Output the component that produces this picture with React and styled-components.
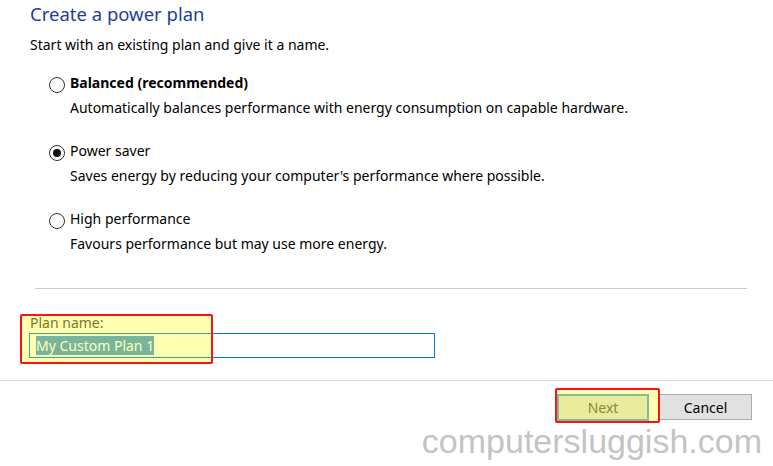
import styled, { createGlobalStyle } from 'styled-components';

const plans = [
	{
		id: 'balanced',
		name: 'Balanced (recommended)',
		bold: true,
		text: 'Automatically balances performance with energy consumption on capable hardware.',
	},
	{
		id: 'saver',
		name: 'Power saver',
		checked: true,
		text: "Saves energy by reducing your computer's performance where possible.",
	},
	{
		id: 'high',
		name: 'High performance',
		text: 'Favours performance but may use more energy.',
	},
];

export default function App() {
	return (
		<>
			<GlobalStyle />
			<Page>
				<Content>
					<Title>Create a power plan</Title>
					<Intro>Start with an existing plan and give it a name.</Intro>

					<OptionList>
						{plans.map((plan) => (
							<Option key={plan.id}>
								<OptionRow>
									<Radio checked={plan.checked} />
									<OptionName bold={plan.bold}>{plan.name}</OptionName>
								</OptionRow>
								<OptionText>{plan.text}</OptionText>
							</Option>
						))}
					</OptionList>

					<Divider />

					<Field>
						<FieldLabel>Plan name:</FieldLabel>
						<TextBox>
							<Selected>My Custom Plan 1</Selected>
						</TextBox>
						<Highlight left='-9px' top='1px' width='193px' height='50px' />
					</Field>
				</Content>

				<Footer>
					<ButtonSlot>
						<Button primary>Next</Button>
						<Highlight left='-2px' top='-6px' width='105px' height='35px' />
					</ButtonSlot>
					<Button>Cancel</Button>
				</Footer>

				<Watermark>computersluggish.com</Watermark>
			</Page>
		</>
	);
}

const GlobalStyle = createGlobalStyle`
	body {
		margin: 0;
		background: #ffffff;
		font-family: 'Noto Sans', 'Open Sans', sans-serif;
	}
`;

const Page = styled.div`
	position: relative;
	width: 773px;
	height: 466px;
	overflow: hidden;
	background: #ffffff;
	display: flex;
	flex-direction: column;
`;

const Content = styled.div`
	padding-left: 30px;
	display: flex;
	flex-direction: column;
`;

const Title = styled.h1`
	margin: 1px 0 0;
	font-size: 18.5px;
	line-height: 26px;
	font-weight: 400;
	color: #1f3d9e;
`;

const Intro = styled.p`
	margin: 8px 0 0;
	font-size: 14px;
	line-height: 20px;
	color: #000;
`;

const OptionList = styled.div`
	margin-top: 18px;
	padding-left: 19px;
	display: flex;
	flex-direction: column;
	gap: 23px;
`;

const Option = styled.div`
	display: flex;
	flex-direction: column;
	gap: 5px;
`;

const OptionRow = styled.div`
	display: flex;
	align-items: flex-start;
	gap: 5px;
`;

const Radio = styled.span`
	box-sizing: border-box;
	width: 16px;
	height: 16px;
	margin-top: 4px;
	border: 1px solid #333;
	border-radius: 50%;
	background: #fff;
	display: flex;
	align-items: center;
	justify-content: center;

	&::after {
		content: '';
		width: 8px;
		height: 8px;
		border-radius: 50%;
		background: #111;
		display: ${(props) => (props.checked ? 'block' : 'none')};
	}
`;

const OptionName = styled.span`
	font-size: 14px;
	line-height: 20px;
	font-weight: ${(props) => (props.bold ? 700 : 400)};
	color: #000;
`;

const OptionText = styled.span`
	padding-left: 21px;
	font-size: 14px;
	line-height: 20px;
	color: #000;
`;

const Divider = styled.hr`
	margin: 34px 0 0 5px;
	width: 712px;
	border: none;
	border-top: 1px solid #cdcdcd;
`;

const Field = styled.div`
	position: relative;
	margin: 24px 0 0 -1px;
	width: 406px;
	display: flex;
	flex-direction: column;
`;

const FieldLabel = styled.label`
	padding-left: 1px;
	font-size: 14px;
	line-height: 20px;
	color: #3c3c3c;
`;

const TextBox = styled.div`
	box-sizing: border-box;
	height: 25px;
	padding: 2px 6px;
	border: 1px solid #0078d7;
	display: flex;
	align-items: center;
`;

const Selected = styled.span`
	font-size: 14px;
	line-height: 19px;
	color: #fff;
	background: #3e96e0;
`;

const Highlight = styled.span`
	position: absolute;
	left: ${(props) => props.left};
	top: ${(props) => props.top};
	width: ${(props) => props.width};
	height: ${(props) => props.height};
	box-sizing: border-box;
	border: 2px solid #f5141a;
	border-radius: 2px;
	background: rgba(255, 255, 0, 0.3);
	pointer-events: none;
`;

const Footer = styled.div`
	margin-top: 22px;
	padding: 13px 21px 0 0;
	border-top: 1px solid #dcdcdc;
	display: flex;
	justify-content: flex-end;
	gap: 10px;
`;

const ButtonSlot = styled.div`
	position: relative;
	display: flex;
`;

const Button = styled.button`
	box-sizing: border-box;
	width: ${(props) => (props.primary ? '92px' : '93px')};
	height: ${(props) => (props.primary ? '27px' : '26px')};
	padding: 0;
	font-family: 'Noto Sans', 'Open Sans', sans-serif;
	font-size: 14px;
	color: ${(props) => (props.primary ? '#555' : '#000')};
	background: #e1e1e1;
	border: ${(props) => (props.primary ? '2px solid #4a9ee0' : '1px solid #adadad')};
	outline: none;
`;

const Watermark = styled.div`
	position: absolute;
	right: 11px;
	top: 422px;
	font-family: 'Liberation Sans', Arial, sans-serif;
	font-size: 34px;
	line-height: 38px;
	color: #c4c4c4;
	pointer-events: none;
`;
